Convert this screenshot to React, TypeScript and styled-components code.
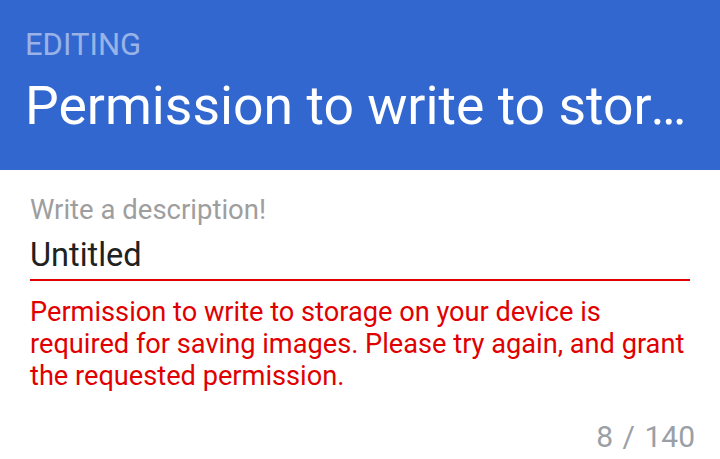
import React from "react";
import styled, { createGlobalStyle } from "styled-components";

const Global = createGlobalStyle`
  html, body { margin: 0; padding: 0; background: #ffffff; }
  body { font-family: Roboto, "Noto Sans", "Liberation Sans", sans-serif; }
`;

const Page = styled.div`
  width: 720px;
  height: 459px;
  display: flex;
  flex-direction: column;
  background: #ffffff;
  overflow: hidden;
`;

const Header = styled.header`
  background: #3367d0;
  padding: 27px 25px 34px 25px;
  display: flex;
  flex-direction: column;
  gap: 13px;
`;

const Overline = styled.div`
  font-size: 31px;
  line-height: 36px;
  color: rgba(255, 255, 255, 0.5);
`;

const Title = styled.h1`
  margin: 0;
  font-size: 53.5px;
  line-height: 60px;
  font-weight: 400;
  color: #ffffff;
  white-space: nowrap;
  overflow: hidden;
  text-overflow: ellipsis;
`;

const Body = styled.main`
  padding: 24px 30px 0 30px;
  display: flex;
  flex-direction: column;
`;

const Hint = styled.label`
  font-size: 27.5px;
  line-height: 32px;
  color: #9e9e9e;
`;

const Field = styled.div<{ $error?: boolean }>`
  margin-top: 10px;
  padding-bottom: 5px;
  border-bottom: 2px solid ${(p) => (p.$error ? "#e00000" : "#9e9e9e")};
  font-size: 32.5px;
  line-height: 38px;
  color: #212121;
`;

const ErrorText = styled.p`
  margin: 15px 0 0 0;
  font-size: 27.2px;
  line-height: 32px;
  color: #e00000;
`;

const CounterRow = styled.div`
  margin-top: 29px;
  margin-right: -5px;
  display: flex;
  justify-content: flex-end;
`;

const Counter = styled.span`
  font-size: 30px;
  line-height: 32px;
  word-spacing: 2px;
  color: #9aa0a6;
`;

export default function App() {
  return (
    <Page>
      <Global />
      <Header>
        <Overline>EDITING</Overline>
        <Title>Permission to write to storage on your device is required</Title>
      </Header>
      <Body>
        <Hint>Write a description!</Hint>
        <Field $error>Untitled</Field>
        <ErrorText>
          Permission to write to storage on your device is required for saving
          images. Please try again, and grant the requested permission.
        </ErrorText>
        <CounterRow>
          <Counter>8 / 140</Counter>
        </CounterRow>
      </Body>
    </Page>
  );
}
